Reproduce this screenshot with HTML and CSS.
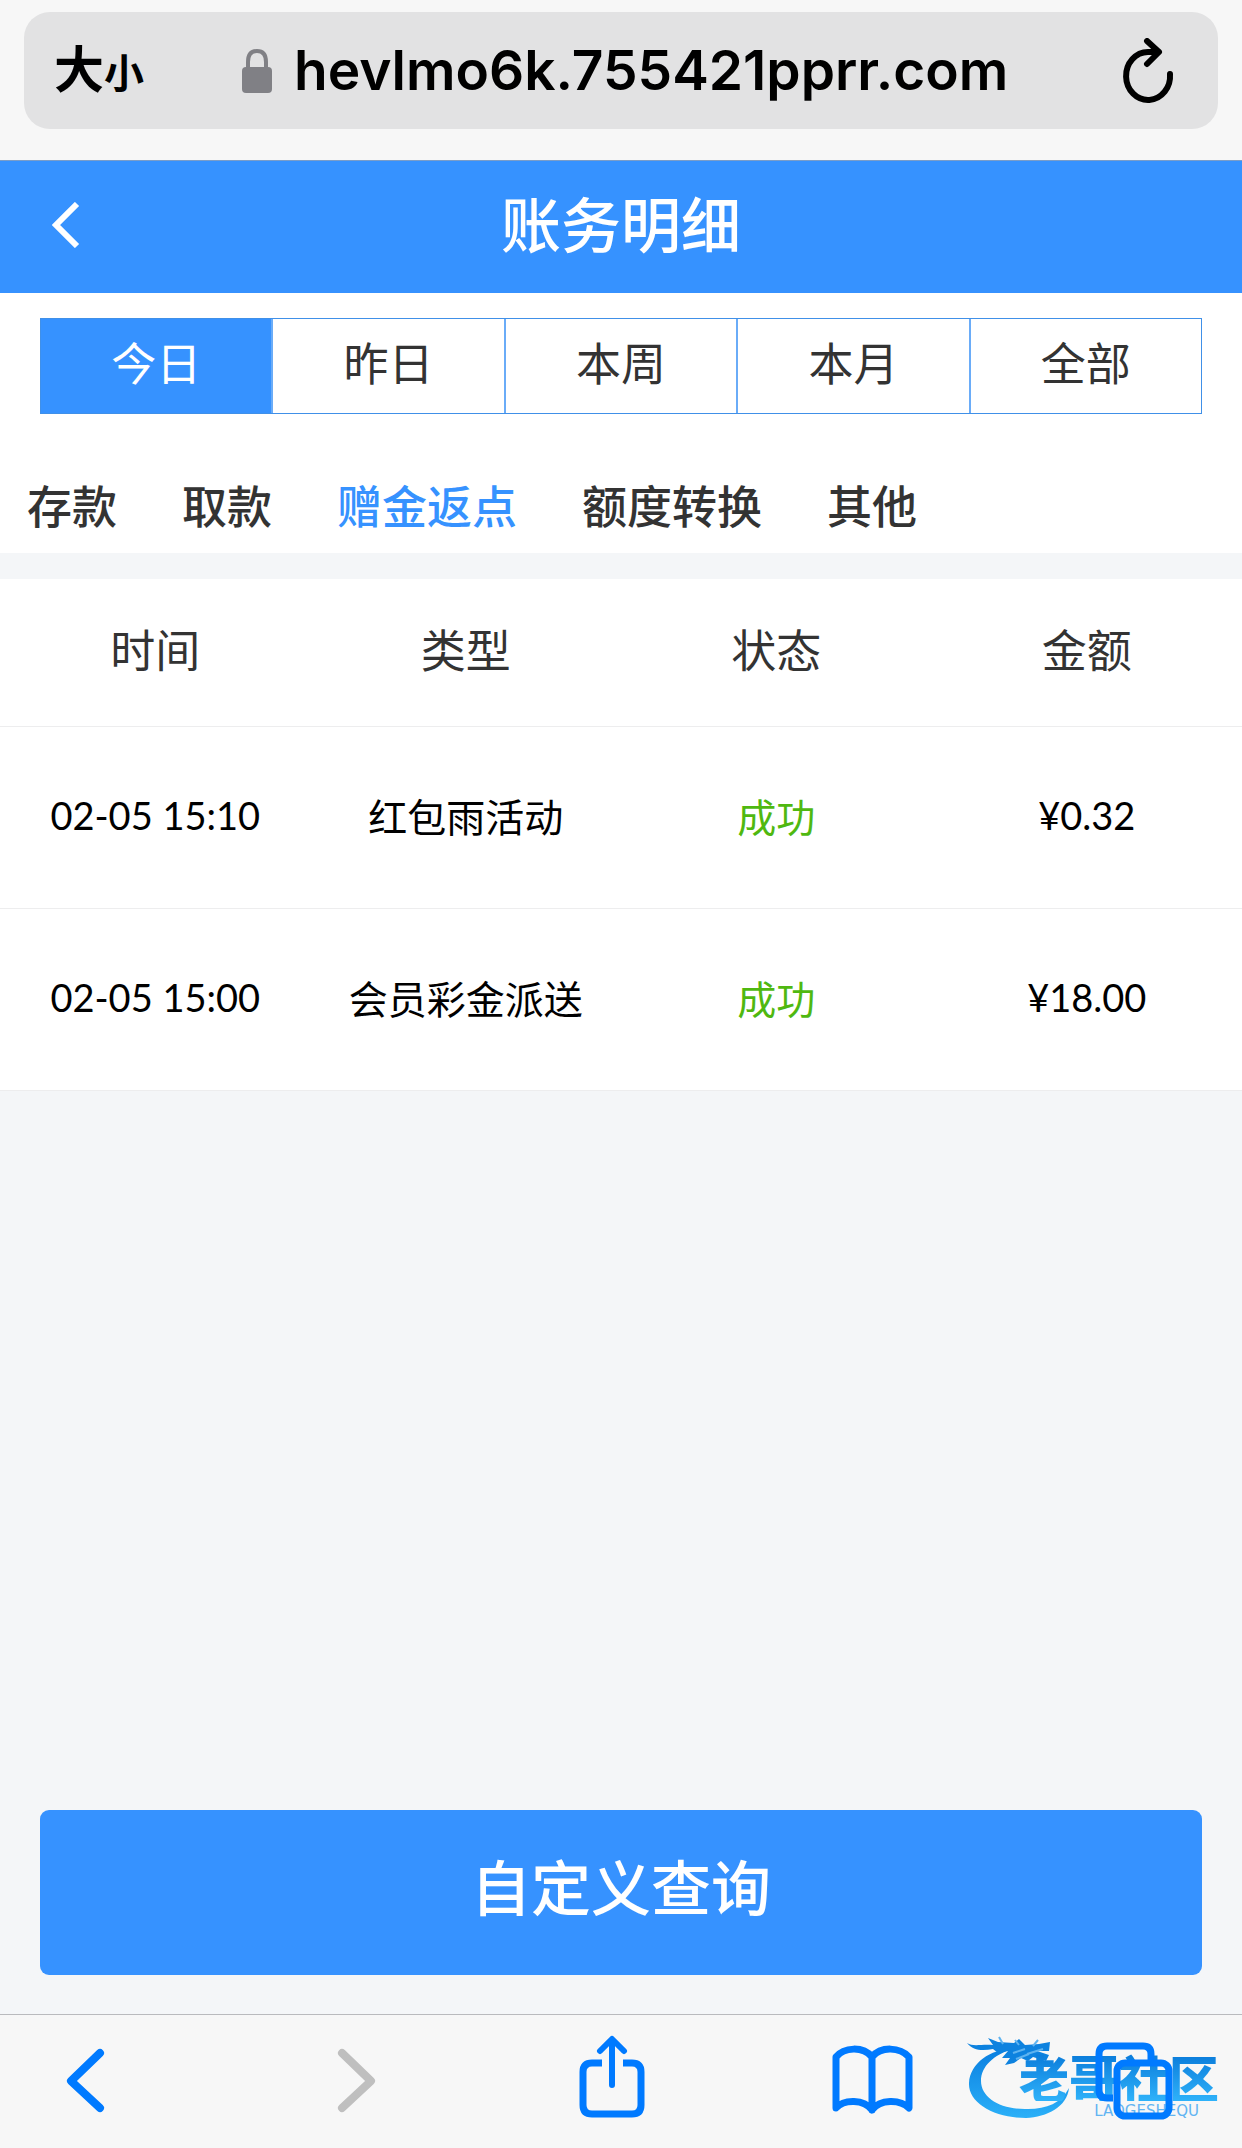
FILE: index.html
```html
<!DOCTYPE html>
<html lang="zh-CN">
<head>
  <meta charset="UTF-8">
  <meta name="viewport" content="width=device-width, initial-scale=1">
  <title>账务明细</title>
  <link rel="stylesheet" href="styles.css">
</head>
<body>
  <div class="browser-top">
    <div class="address-bar">
      <button class="text-size">大<span class="small">小</span></button>
      <label class="lock" for="url" aria-label="网址">
        <svg width="30" height="46" viewBox="0 0 30 46">
          <path d="M6 22V14C6 7 9 3 15 3s9 4 9 11v8" fill="none" stroke="#808085" stroke-width="4"/>
          <rect x="0" y="19" width="30" height="26" rx="4" fill="#808085"/>
        </svg>
      </label>
      <input class="url" id="url" type="text" value="hevlmo6k.755421pprr.com">
      <button class="reload" aria-label="刷新">
        <svg width="52" height="66" viewBox="0 0 52 66" fill="none" stroke="#000" stroke-width="6" stroke-linecap="round" stroke-linejoin="round">
          <path d="M48 36A22 24 0 1 1 26 14H36"/>
          <path d="M25 3L37 14L25 26"/>
        </svg>
      </button>
    </div>
  </div>

  <header class="header">
    <button class="back" aria-label="返回">
      <svg width="28" height="46" viewBox="0 0 28 46" fill="none" stroke="#fff" stroke-width="6">
        <path d="M25 2L4 23L25 44"/>
      </svg>
    </button>
    <h1>账务明细</h1>
  </header>

  <main class="content">
    <div class="filters">
      <div class="days">
        <button class="active">今日</button>
        <button>昨日</button>
        <button>本周</button>
        <button>本月</button>
        <button>全部</button>
      </div>
      <nav class="types">
        <a href="#">存款</a>
        <a href="#">取款</a>
        <a href="#" class="active">赠金返点</a>
        <a href="#">额度转换</a>
        <a href="#">其他</a>
      </nav>
    </div>

    <table class="records">
      <thead>
        <tr>
          <th>时间</th>
          <th>类型</th>
          <th>状态</th>
          <th>金额</th>
        </tr>
      </thead>
      <tbody>
        <tr>
          <td class="num">02-05 15:10</td>
          <td>红包雨活动</td>
          <td class="success">成功</td>
          <td class="num">¥0.32</td>
        </tr>
        <tr>
          <td class="num">02-05 15:00</td>
          <td>会员彩金派送</td>
          <td class="success">成功</td>
          <td class="num">¥18.00</td>
        </tr>
      </tbody>
    </table>

    <button class="query">自定义查询</button>
  </main>

  <footer class="toolbar">
    <button aria-label="后退">
      <svg width="100" height="90" viewBox="0 0 100 90" fill="none" stroke="#007aff" stroke-width="8" stroke-linecap="round" stroke-linejoin="round">
        <path d="M65 18L36 46L65 73"/>
      </svg>
    </button>
    <button aria-label="前进" disabled>
      <svg width="100" height="90" viewBox="0 0 100 90" fill="none" stroke="#bfbfbf" stroke-width="8" stroke-linecap="round" stroke-linejoin="round">
        <path d="M45 18L74 46L45 73"/>
      </svg>
    </button>
    <button aria-label="分享">
      <svg width="100" height="90" viewBox="0 0 100 90" fill="none" stroke="#007aff" stroke-width="7">
        <path d="M43 28H33Q24 28 24 37V70Q24 79 33 79H73Q82 79 82 70V37Q82 28 73 28H64"/>
        <path d="M53 50V5M41 16L53 4L65 16" stroke-width="6" stroke-linecap="round" stroke-linejoin="round"/>
      </svg>
    </button>
    <button aria-label="书签">
      <svg width="100" height="90" viewBox="0 0 100 90" fill="none" stroke="#007aff" stroke-width="7" stroke-linecap="round" stroke-linejoin="round">
        <path d="M51 22C42 11 23 12 15 22V73C23 64 43 64 51 75C59 64 79 64 88 73V22C79 12 60 11 51 22V75"/>
      </svg>
    </button>
    <button aria-label="标签页">
      <svg width="100" height="90" viewBox="0 0 100 90" fill="none" stroke="#007aff" stroke-width="7">
        <path d="M30 63H24Q16 63 16 55V19Q16 11 24 11H60Q68 11 68 19V28"/>
        <rect x="34" y="28" width="52" height="53" rx="8"/>
      </svg>
    </button>

    <div class="watermark">
      <svg width="96" height="90" viewBox="0 0 96 90">
        <defs>
          <linearGradient id="ring" x1="0" y1="0" x2="0" y2="1">
            <stop offset="0" stop-color="#0a7fe0"/>
            <stop offset="1" stop-color="#2bb0f8"/>
          </linearGradient>
        </defs>
        <path fill="url(#ring)" d="M45 18C24 18 3 32 2 52C1 72 27 87 59 87C80 86 100 76 102 57C94 72 80 78 61 78C34 79 14 67 14 50C14 35 27 24 45 18Z"/>
        <path fill="#0d82df" d="M0 12C6 16 14 13 26 14L21 7L31 11L47 12L52 8L58 14L72 13L83 11L82 20L70 20L82 24L79 30L66 26L61 30L54 27L47 32L38 34L43 27L35 27L41 20L31 22L26 18C16 20 6 20 0 12Z"/>
        <path stroke="#5eb3f0" stroke-width="2" fill="none" d="M36 13L32 6M52 14L48 9M66 15L71 9M46 22L58 18M60 23L76 18M49 28L62 23"/>
      </svg>
      <div class="watermark-text">
        <div class="name">老哥社区</div>
        <div class="latin">LAOGESHEQU</div>
      </div>
    </div>
  </footer>
</body>
</html>
```

FILE: styles.css
```css
* {
  box-sizing: border-box;
}

body {
  display: flex;
  flex-direction: column;
  min-height: 100vh;
  margin: 0;
  background-color: #f4f6f8;
  color: #333;
  font-family: Lato, "Noto Sans CJK SC", sans-serif;
}

button {
  padding: 0;
  border: none;
  background: none;
  color: inherit;
  font-family: inherit;
}

svg {
  display: block;
}

/* address bar */
.browser-top {
  padding: 12px 24px 31px;
  border-bottom: 1px solid #7b9dc8;
  background-color: #f7f7f7;
}

.address-bar {
  display: flex;
  align-items: center;
  height: 117px;
  padding: 0 44px 0 30px;
  border-radius: 26px;
  background-color: #e2e2e3;
  color: #000;
}

.text-size {
  font-size: 50px;
  font-weight: 700;
  line-height: 60px;
}

.text-size .small {
  font-size: 40px;
}

.lock {
  margin-left: 98px;
}

.url {
  flex: 1;
  min-width: 0;
  margin-left: 22px;
  padding: 0 0 2px;
  border: none;
  background: none;
  color: #000;
  font-family: Inter, sans-serif;
  font-size: 55px;
  font-weight: 600;
}

/* page title */
.header {
  display: grid;
  grid-template-columns: 80px 1fr 80px;
  align-items: center;
  height: 132px;
  padding: 0 52px 4px;
  background-color: #3692ff;
  color: #fff;
}

.header h1 {
  margin: 0;
  font-size: 60px;
  font-weight: 500;
  line-height: 80px;
  text-align: center;
}

.content {
  flex: 1;
  display: flex;
  flex-direction: column;
}

/* filters */
.filters {
  padding-top: 25px;
  background-color: #fff;
}

.days {
  display: flex;
  margin: 0 40px;
  border: 1px solid #4090e8;
}

.days button {
  flex: 1;
  height: 94px;
  padding-bottom: 10px;
  border-left: 2px solid #6aacf8;
  font-size: 45px;
}

.days button:first-child {
  border-left: none;
}

.days .active {
  background-color: #3692ff;
  color: #fff;
}

.types {
  display: flex;
  gap: 65px;
  padding: 63px 27px 16px;
}

.types a {
  color: #333;
  font-size: 45px;
  font-weight: 500;
  line-height: 60px;
  text-decoration: none;
}

.types .active {
  color: #3692ff;
}

/* records */
.records {
  width: 100%;
  margin-top: 26px;
  border-collapse: collapse;
  table-layout: fixed;
  background-color: #fff;
  text-align: center;
}

.records th {
  height: 147px;
  padding: 0 0 8px;
  font-size: 45px;
  font-weight: 400;
}

.records td {
  height: 182px;
  padding: 0 0 4px;
  color: #000;
  font-size: 39px;
}

.records tr {
  border-bottom: 1px solid #ededee;
}

.records .num {
  font-size: 38px;
}

.records .success {
  color: #4fb810;
}

.query {
  height: 165px;
  margin: auto 40px 39px;
  padding-bottom: 16px;
  border-radius: 9px;
  background-color: #3692ff;
  color: #fff;
  font-size: 60px;
  font-weight: 500;
}

/* bottom toolbar */
.toolbar {
  position: relative;
  display: flex;
  justify-content: space-between;
  height: 134px;
  padding: 20px 59px 0 35px;
  border-top: 1px solid #b9babd;
  background-color: #f7f7f7;
}

.toolbar button {
  position: relative;
  z-index: 1;
  height: 90px;
}

.watermark {
  position: absolute;
  right: 19px;
  top: 16px;
  display: flex;
  width: 256px;
  font-family: "Noto Sans CJK SC", sans-serif;
}

.watermark svg {
  flex: none;
  overflow: visible;
}

.watermark-text {
  margin-left: -44px;
  padding-top: 20px;
}

.name {
  background: linear-gradient(#0878d8, #2fb2fa);
  -webkit-background-clip: text;
  background-clip: text;
  color: transparent;
  font-size: 50px;
  font-weight: 900;
  line-height: 50px;
}

.latin {
  padding: 2px 20px 0 0;
  color: #62b4f2;
  font-family: "DejaVu Sans", sans-serif;
  font-size: 15px;
  line-height: 16px;
  text-align: right;
}
```
